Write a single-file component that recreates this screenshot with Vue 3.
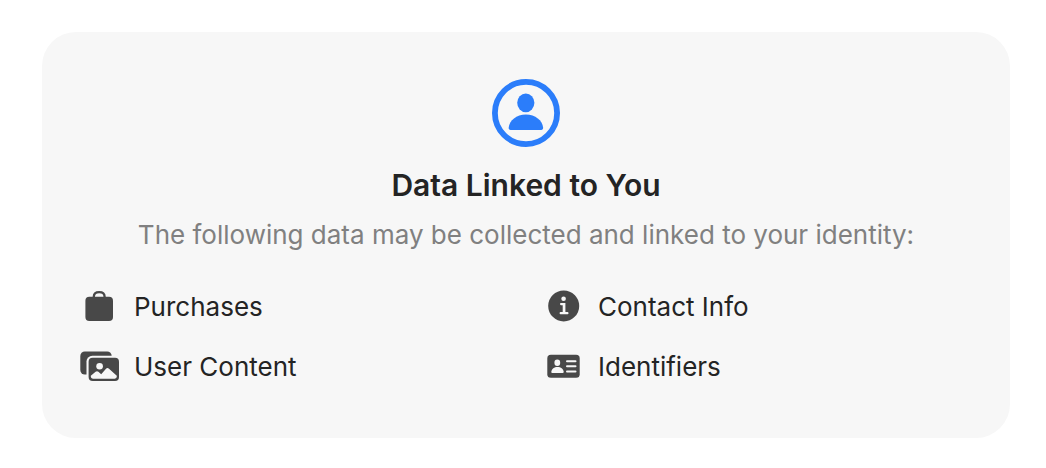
<script setup>
const items = [
  { id: 'purchases', label: 'Purchases' },
  { id: 'contact', label: 'Contact Info' },
  { id: 'content', label: 'User Content' },
  { id: 'identifiers', label: 'Identifiers' },
]
</script>

<template>
  <section class="card" aria-labelledby="card-title">
    <svg class="badge" viewBox="0 0 68 68" aria-hidden="true">
      <circle cx="34" cy="34" r="31.1" fill="none" stroke="currentColor" stroke-width="5.8" />
      <ellipse cx="33.8" cy="23.8" rx="8.6" ry="9.4" fill="currentColor" />
      <path d="M18.6 51C17.2 51 16.6 50 16.7 48.6C17.4 41.6 24.4 35.6 33.9 35.6S50.4 41.6 51.1 48.6C51.2 50 50.6 51 49.2 51Z" fill="currentColor" />
    </svg>
    <h2 id="card-title" class="title">Data Linked to You</h2>
    <p class="lead">The following data may be collected and linked to your identity:</p>
    <ul class="grid">
      <li v-for="item in items" :key="item.id" class="item">
        <svg class="icon" viewBox="0 0 40 40" aria-hidden="true">
          <g v-if="item.id === 'purchases'">
            <path d="M14.8 11V9.8C14.8 7 17 5.2 20.2 5.2S25.6 7 25.6 9.8V11" fill="none" stroke="currentColor" stroke-width="2.3" />
            <rect x="6.4" y="9.7" width="27.6" height="24.2" rx="4" fill="currentColor" />
          </g>
          <g v-else-if="item.id === 'contact'">
            <circle cx="20.7" cy="18.9" r="15.5" fill="currentColor" />
            <circle class="cut" cx="20.6" cy="11.7" r="2.3" />
            <path class="cut" d="M17.9 16H22.4V25.1H24.6Q25.5 25.1 25.5 26.2T24.6 27.3H17.5Q16.6 27.3 16.6 26.2T17.5 25.1H19.7V18.2H17.9Q17 18.2 17 17.1T17.9 16Z" />
          </g>
          <g v-else-if="item.id === 'content'">
            <rect x="1.3" y="4.4" width="31.4" height="23.2" rx="4.5" fill="currentColor" />
            <rect class="cut" x="7.5" y="8.7" width="34.5" height="27.5" rx="5.8" />
            <rect x="9.6" y="10.8" width="30.4" height="23.2" rx="4" fill="currentColor" />
            <circle class="cut" cx="20.6" cy="19.2" r="3.3" />
            <path class="cut" d="M11.8 28.8L16.6 24.8Q18 23.6 19.4 24.8L22.2 27.2L26.8 21.9Q28.4 20.2 30 21.8L37.8 28.8V29.6Q37.8 31.7 35.7 31.7H13.9Q11.8 31.7 11.8 29.6Z" />
          </g>
          <g v-else>
            <rect x="4.3" y="7.8" width="32.4" height="23" rx="3.6" fill="currentColor" />
            <ellipse class="cut" cx="14.3" cy="15.7" rx="2.9" ry="3.2" />
            <path class="cut" d="M9.2 26Q8.2 26 8.3 24.8C8.7 22 11.2 20.1 14.5 20.1S20.3 22 20.7 24.8Q20.8 26 19.8 26Z" />
            <path class="rule" d="M24 14.3H32.5M24 19.3H32.5M24 24.4H32.5" />
          </g>
        </svg>
        <span>{{ item.label }}</span>
      </li>
    </ul>
  </section>
</template>

<style>
body {
  background: #fff;
}
</style>

<style scoped>
.card {
  margin: 32px 36px 30px 42px;
  padding: 47px 37px 55px;
  border-radius: 34px;
  background: #f7f7f7;
  color: #242424;
  font-family: Inter, "Liberation Sans", sans-serif;
  text-align: center;
}

.badge {
  display: block;
  width: 68px;
  height: 68px;
  margin: 0 auto;
  color: #2b7dfa;
}

.title {
  margin: 20px 0 0;
  font-size: 30px;
  font-weight: 600;
  line-height: 36px;
}

.lead {
  margin: 16px 0 0;
  color: #808080;
  font-size: 26px;
  line-height: 32px;
}

.grid {
  display: grid;
  grid-template-columns: 1fr 1fr;
  gap: 28px 34px;
  margin: 40px 0 0;
  padding: 0;
  list-style: none;
}

.item {
  display: flex;
  align-items: center;
  gap: 15px;
  height: 32px;
  font-size: 26px;
  line-height: 32px;
}

.icon {
  flex: none;
  width: 40px;
  height: 40px;
  color: #484848;
}

.cut {
  fill: #f7f7f7;
}

.rule {
  fill: none;
  stroke: #f7f7f7;
  stroke-width: 2;
  stroke-linecap: round;
}
</style>
